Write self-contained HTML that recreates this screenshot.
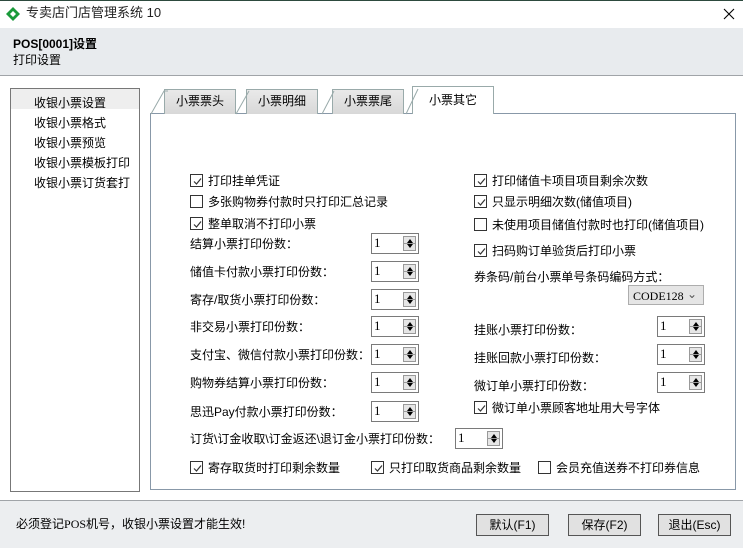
<!DOCTYPE html>
<html><head><meta charset="utf-8"><style>
*{margin:0;padding:0;box-sizing:border-box}
body{width:743px;height:548px;position:relative;overflow:hidden;background:#fff;font-family:"Liberation Sans","Noto Sans CJK SC","WenQuanYi Zen Hei",sans-serif;font-size:12px;color:#000}
.a{position:absolute;white-space:nowrap;line-height:14px}
.cb{position:absolute;width:13px;height:13px;border:1px solid #333;background:#fff}
.cb svg{position:absolute;left:1px;top:1px}
.sp{position:absolute;width:48px;height:21px;border:1px solid #7a7a7a;background:#fff;font-size:13px;padding:1px 0 0 2px;font-family:"Liberation Serif",serif}
.sp i{position:absolute;right:2px;top:2px;width:13px;height:15px;border:1px solid #999;background:#e6e6e6}
.sp i:before{content:"";position:absolute;left:3px;top:2px;border:3px solid transparent;border-bottom:4px solid #000;border-top:0}
.sp i:after{content:"";position:absolute;left:3px;bottom:2px;border:3px solid transparent;border-top:4px solid #000;border-bottom:0}
.sp b{position:absolute;right:3px;top:9px;width:11px;height:1px;background:#999}
.tab{position:absolute;top:89px;height:25px;background:linear-gradient(#e9e9e9,#d8d8d8);border:1px solid #9aa;border-bottom:none;text-align:center;line-height:22px;font-size:12px}
.btn{position:absolute;top:514px;height:22px;border:1px solid #555;background:#e1e1e1;text-align:center;line-height:20px;font-size:12px}
</style></head><body>
<div class="a" style="left:0;top:0;width:743px;height:1px;background:#2d4a3e"></div>
<svg class="a" style="left:5px;top:6px" width="16" height="16" viewBox="0 0 16 16"><path d="M8 1L15 8L8 15L1 8Z" fill="#1a9a3a"/><path d="M8 5L11 8L8 11L5 8Z" fill="#fff"/></svg>
<div class="a" style="left:26px;top:6px;font-size:13px;color:#222">专卖店门店管理系统 10</div>
<svg class="a" style="left:723px;top:8px" width="12" height="12"><path d="M1 1L11 11M11 1L1 11" stroke="#000" stroke-width="1.1"/></svg>
<div class="a" style="left:0;top:28px;width:743px;height:48px;background:#e8ebee;border-bottom:1px solid #a0a4a8"></div>
<div class="a" style="left:13px;top:37px;font-weight:bold;font-size:12px">POS[0001]设置</div>
<div class="a" style="left:13px;top:53px">打印设置</div>

<div class="a" style="left:10px;top:88px;width:130px;height:404px;border:1px solid #777;background:#fff"></div>
<div class="a" style="left:11px;top:89px;width:128px;height:20px;background:#eeeeee"></div>
<div class="a" style="left:34px;top:93px;line-height:20px;font-size:12px">收银小票设置<br>收银小票格式<br>收银小票预览<br>收银小票模板打印<br>收银小票订货套打</div>

<div class="a" style="left:150px;top:113px;width:586px;height:377px;border:1px solid #8898a8;background:#fff"></div>
<div class="tab" style="left:164px;width:72px">小票票头</div>
<div class="tab" style="left:246px;width:72px">小票明细</div>
<div class="tab" style="left:332px;width:72px">小票票尾</div>
<div class="tab" style="left:412px;top:86px;height:28px;width:82px;background:#fff;line-height:26px">小票其它</div>
<svg class="a" style="left:150px;top:88px" width="350" height="27"><path d="M1 26L14 3H18M86 26L99 3M172 26L184 3M256 26L268 1" stroke="#9aa" fill="none"/></svg>

<div id="c"></div>
<div class="a" style="left:0;top:500px;width:743px;height:48px;background:#eceef0;border-top:1px solid #a0a4a8"></div>
<div class="a" style="left:16px;top:517px">必须登记<span style="font-family:'Liberation Serif',serif">POS</span>机号，收银小票设置才能生效!</div>
<div class="btn" style="left:476px;width:73px">默认(F1)</div>
<div class="btn" style="left:568px;width:73px">保存(F2)</div>
<div class="btn" style="left:658px;width:73px">退出(Esc)</div>
<script>
var c=document.getElementById('c'),h='';
var ck='<svg width="11" height="11"><path d="M2 5.5L4.5 8L9 2.5" stroke="#333" stroke-width="1.2" fill="none"/></svg>';
function cb(x,y,t,on){h+='<div class="cb" style="left:'+x+'px;top:'+y+'px">'+(on?ck:'')+'</div><div class="a" style="left:'+(x+18)+'px;top:'+(y)+'px;font-size:12px">'+t+'</div>';}
function sp(x,y){h+='<div class="sp" style="left:'+x+'px;top:'+y+'px">1<i></i><b></b></div>';}
function lb(x,y,t){h+='<div class="a" style="left:'+x+'px;top:'+y+'px;font-size:12px">'+t+'</div>';}
cb(190,174,'打印挂单凭证',1);cb(190,195,'多张购物券付款时只打印汇总记录',0);cb(190,217,'整单取消不打印小票',1);
var L=[['结算小票打印份数：',243],['储值卡付款小票打印份数：',271],['寄存/取货小票打印份数：',299],['非交易小票打印份数：',326],['支付宝、微信付款小票打印份数：',354],['购物券结算小票打印份数：',382],['思迅Pay付款小票打印份数：',411]];
L.forEach(function(r){lb(190,r[1]-6,r[0]);sp(371,r[1]-10);});
lb(190,432,'订货\\订金收取\\订金返还\\退订金小票打印份数：');sp(455,428);
cb(190,461,'寄存取货时打印剩余数量',1);cb(371,461,'只打印取货商品剩余数量',1);cb(538,461,'会员充值送券不打印券信息',0);
cb(474,174,'打印储值卡项目项目剩余次数',1);cb(474,195,'只显示明细次数(储值项目)',1);cb(474,218,'未使用项目储值付款时也打印(储值项目)',0);cb(474,244,'扫码购订单验货后打印小票',1);
lb(474,270,'券条码/前台小票单号条码编码方式：');
h+='<div class="a" style="left:628px;top:285px;width:76px;height:20px;border:1px solid #adadad;background:#e5e5e5;font-family:\'Liberation Serif\',serif;padding:3px 0 0 4px">CODE128<span style="position:absolute;right:6px;top:1px;color:#555">&#8964;</span></div>';
[['挂账小票打印份数：',326],['挂账回款小票打印份数：',354],['微订单小票打印份数：',382]].forEach(function(r){lb(474,r[1]-3,r[0]);sp(657,r[1]-10);});
cb(474,401,'微订单小票顾客地址用大号字体',1);
c.innerHTML=h;
</script>
</body></html>
